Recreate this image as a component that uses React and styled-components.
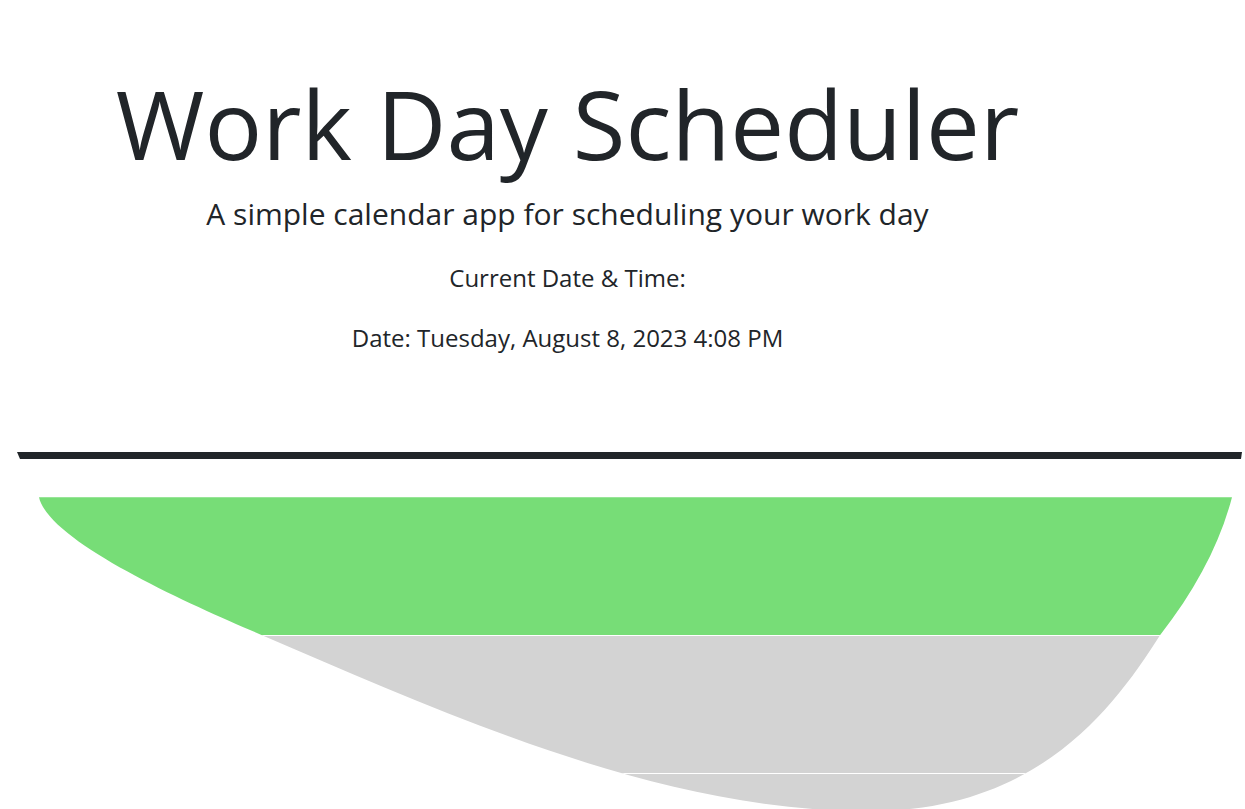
import React from "react";
import styled, { createGlobalStyle } from "styled-components";

const GlobalStyle = createGlobalStyle`
  html, body {
    margin: 0;
    padding: 0;
    background: #ffffff;
  }
  body {
    font-family: "Open Sans", "Liberation Sans", sans-serif;
    color: #212529;
    overflow: hidden;
  }
`;

const Page = styled.div`
  display: flex;
  flex-direction: column;
  width: 1245px;
`;

const Header = styled.header`
  width: 1135px;
  padding-top: 65px;
  display: flex;
  flex-direction: column;
  align-items: center;
  text-align: center;
`;

const Title = styled.h1`
  margin: 0;
  font-size: 96px;
  font-weight: 400;
  line-height: 1.2;
  white-space: nowrap;
`;

const Lead = styled.p`
  margin: 16px 0 0;
  font-size: 30px;
  font-weight: 400;
  line-height: 36px;
  white-space: nowrap;
`;

const Info = styled.p`
  margin: ${(p) => p.$gap}px 0 0;
  font-size: 24px;
  font-weight: 400;
  line-height: 33px;
  white-space: nowrap;
`;

const Divider = styled.div`
  margin: 98px 0 0 17px;
  width: 1221px;
  height: 0;
  border-top: 7px solid #212529;
  border-left: 3px solid transparent;
  border-right: 1px solid transparent;
`;

const Schedule = styled.section`
  margin: 38px 0 0 39px;
  width: 1193px;
  display: flex;
  flex-direction: column;
  clip-path: path(
    "M0 0 L1193 0 C1181 46 1157 92 1121 138 C1075 210 1000 314 830 314 C625 314 423 224 223 138 C153 108 10 45 0 0 Z"
  );
`;

const Row = styled.div`
  box-sizing: border-box;
  height: 138px;
  flex: none;
  border-top: ${(p) => (p.$first ? "none" : "1px solid #ffffff")};
  background-color: ${(p) =>
    p.$state === "future" ? "#77dd77" : p.$state === "present" ? "#ff6961" : "#d3d3d3"};
`;

export default function App() {
  return (
    <Page>
      <GlobalStyle />
      <Header>
        <Title>Work Day Scheduler</Title>
        <Lead>A simple calendar app for scheduling your work day</Lead>
        <Info $gap={29}>Current Date &amp; Time:</Info>
        <Info $gap={27}>Date: Tuesday, August 8, 2023 4:08 PM</Info>
      </Header>
      <Divider />
      <Schedule>
        <Row $first $state="future" />
        <Row $state="past" />
        <Row $state="past" />
      </Schedule>
    </Page>
  );
}
